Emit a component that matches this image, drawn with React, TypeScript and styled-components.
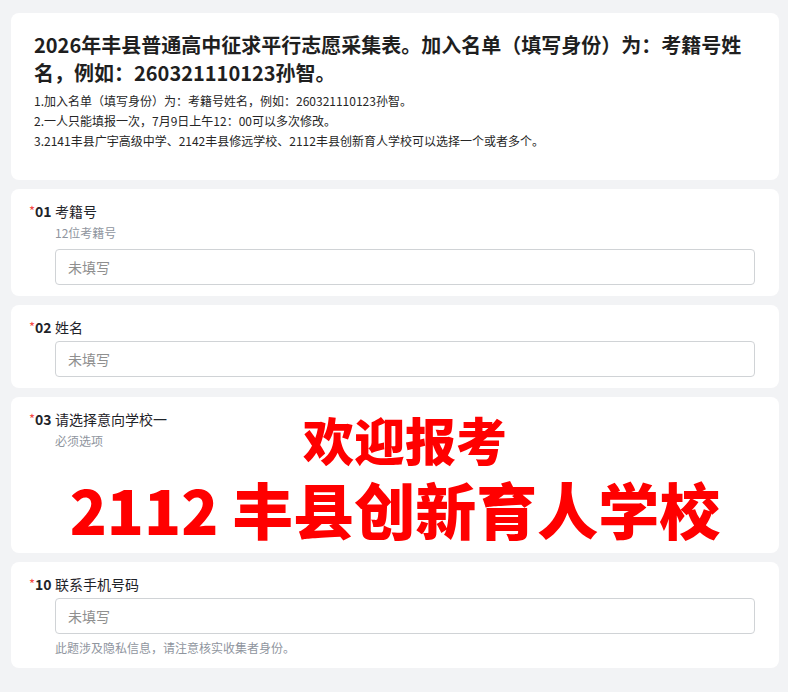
import React from 'react';
import styled, { createGlobalStyle } from 'styled-components';

const GlobalStyle = createGlobalStyle`
  html, body {
    margin: 0;
    padding: 0;
    background: #f2f3f5;
  }
  body {
    font-family: "Noto Sans CJK SC", "Noto Sans", "Liberation Sans", sans-serif;
    color: #1f2329;
  }
  * {
    box-sizing: border-box;
  }
`;

const Page = styled.div`
  display: flex;
  flex-direction: column;
  gap: 9px;
  padding: 13px 9px 25px 11px;
`;

const Card = styled.section`
  position: relative;
  background: #ffffff;
  border-radius: 8px;
`;

const IntroCard = styled(Card)`
  padding: 18px 23px 29px 23px;
`;

const Title = styled.h1`
  margin: 0;
  font-size: 20px;
  line-height: 28px;
  font-weight: 700;
  color: #1f1f1f;
`;

const Notes = styled.div`
  margin-top: 4px;
  font-size: 12px;
  line-height: 20px;
  color: #262626;
`;

const FieldCard = styled(Card)<{ $bottom?: number }>`
  padding: 12px 24px ${({ $bottom }) => $bottom ?? 11}px 44px;
`;

const Label = styled.div`
  display: flex;
  align-items: center;
  margin-left: -26px;
  font-size: 14px;
  line-height: 20px;
  color: #1f2329;
`;

const Index = styled.span`
  display: inline-flex;
  width: 26px;
  font-weight: 700;
  white-space: nowrap;
`;

const Required = styled.span`
  align-self: flex-start;
  margin-top: 3px;
  color: #f54a45;
  font-weight: 400;
  font-size: 13px;
  line-height: 14px;
`;

const Hint = styled.div<{ $gap?: number }>`
  margin-top: ${({ $gap }) => $gap ?? 2}px;
  font-size: 12px;
  line-height: 20px;
  color: #8f959e;
`;

const Input = styled.input<{ $gap?: number }>`
  display: block;
  width: 100%;
  height: 36px;
  margin-top: ${({ $gap }) => $gap ?? 4}px;
  padding: 0 12px;
  border: 1px solid #d0d3d6;
  border-radius: 4px;
  font-family: inherit;
  font-size: 14px;
  color: #1f2329;
  outline: none;

  &::placeholder {
    color: #8f8f8f;
  }
`;

const OptionsArea = styled.div`
  height: 102px;
`;

// red banner printed across the school choice card
const Banner = styled.div`
  position: absolute;
  inset: 0;
  display: flex;
  flex-direction: column;
  align-items: center;
  color: #ff0000;
  font-weight: 900;
  pointer-events: none;
`;

const BannerTop = styled.div`
  margin-top: 16px;
  margin-left: 20px;
  font-size: 51px;
  line-height: 52px;
`;

const BannerMain = styled.div`
  margin-top: 12px;
  font-size: 61px;
  line-height: 64px;
  white-space: nowrap;
`;

const Field: React.FC<{ no: string; label: string }> = ({ no, label }) => (
  <Label>
    <Index>
      <Required>*</Required>
      {no}
    </Index>
    {label}
  </Label>
);

const App: React.FC = () => {
  return (
    <>
      <GlobalStyle />
      <Page>
        <IntroCard>
          <Title>
            2026年丰县普通高中征求平行志愿采集表。加入名单（填写身份）为：考籍号姓名，例如：260321110123孙智。
          </Title>
          <Notes>
            <div>1.加入名单（填写身份）为：考籍号姓名，例如：260321110123孙智。</div>
            <div>2.一人只能填报一次，7月9日上午12：00可以多次修改。</div>
            <div>3.2141丰县广宇高级中学、2142丰县修远学校、2112丰县创新育人学校可以选择一个或者多个。</div>
          </Notes>
        </IntroCard>

        <FieldCard>
          <Field no="01" label="考籍号" />
          <Hint>12位考籍号</Hint>
          <Input placeholder="未填写" $gap={6} />
        </FieldCard>

        <FieldCard>
          <Field no="02" label="姓名" />
          <Input placeholder="未填写" />
        </FieldCard>

        <FieldCard $bottom={0}>
          <Field no="03" label="请选择意向学校一" />
          <Hint>必须选项</Hint>
          <OptionsArea />
          <Banner>
            <BannerTop>欢迎报考</BannerTop>
            <BannerMain>2112 丰县创新育人学校</BannerMain>
          </Banner>
        </FieldCard>

        <FieldCard $bottom={10}>
          <Field no="10" label="联系手机号码" />
          <Input placeholder="未填写" />
          <Hint $gap={4}>此题涉及隐私信息，请注意核实收集者身份。</Hint>
        </FieldCard>
      </Page>
    </>
  );
};

export default App;
